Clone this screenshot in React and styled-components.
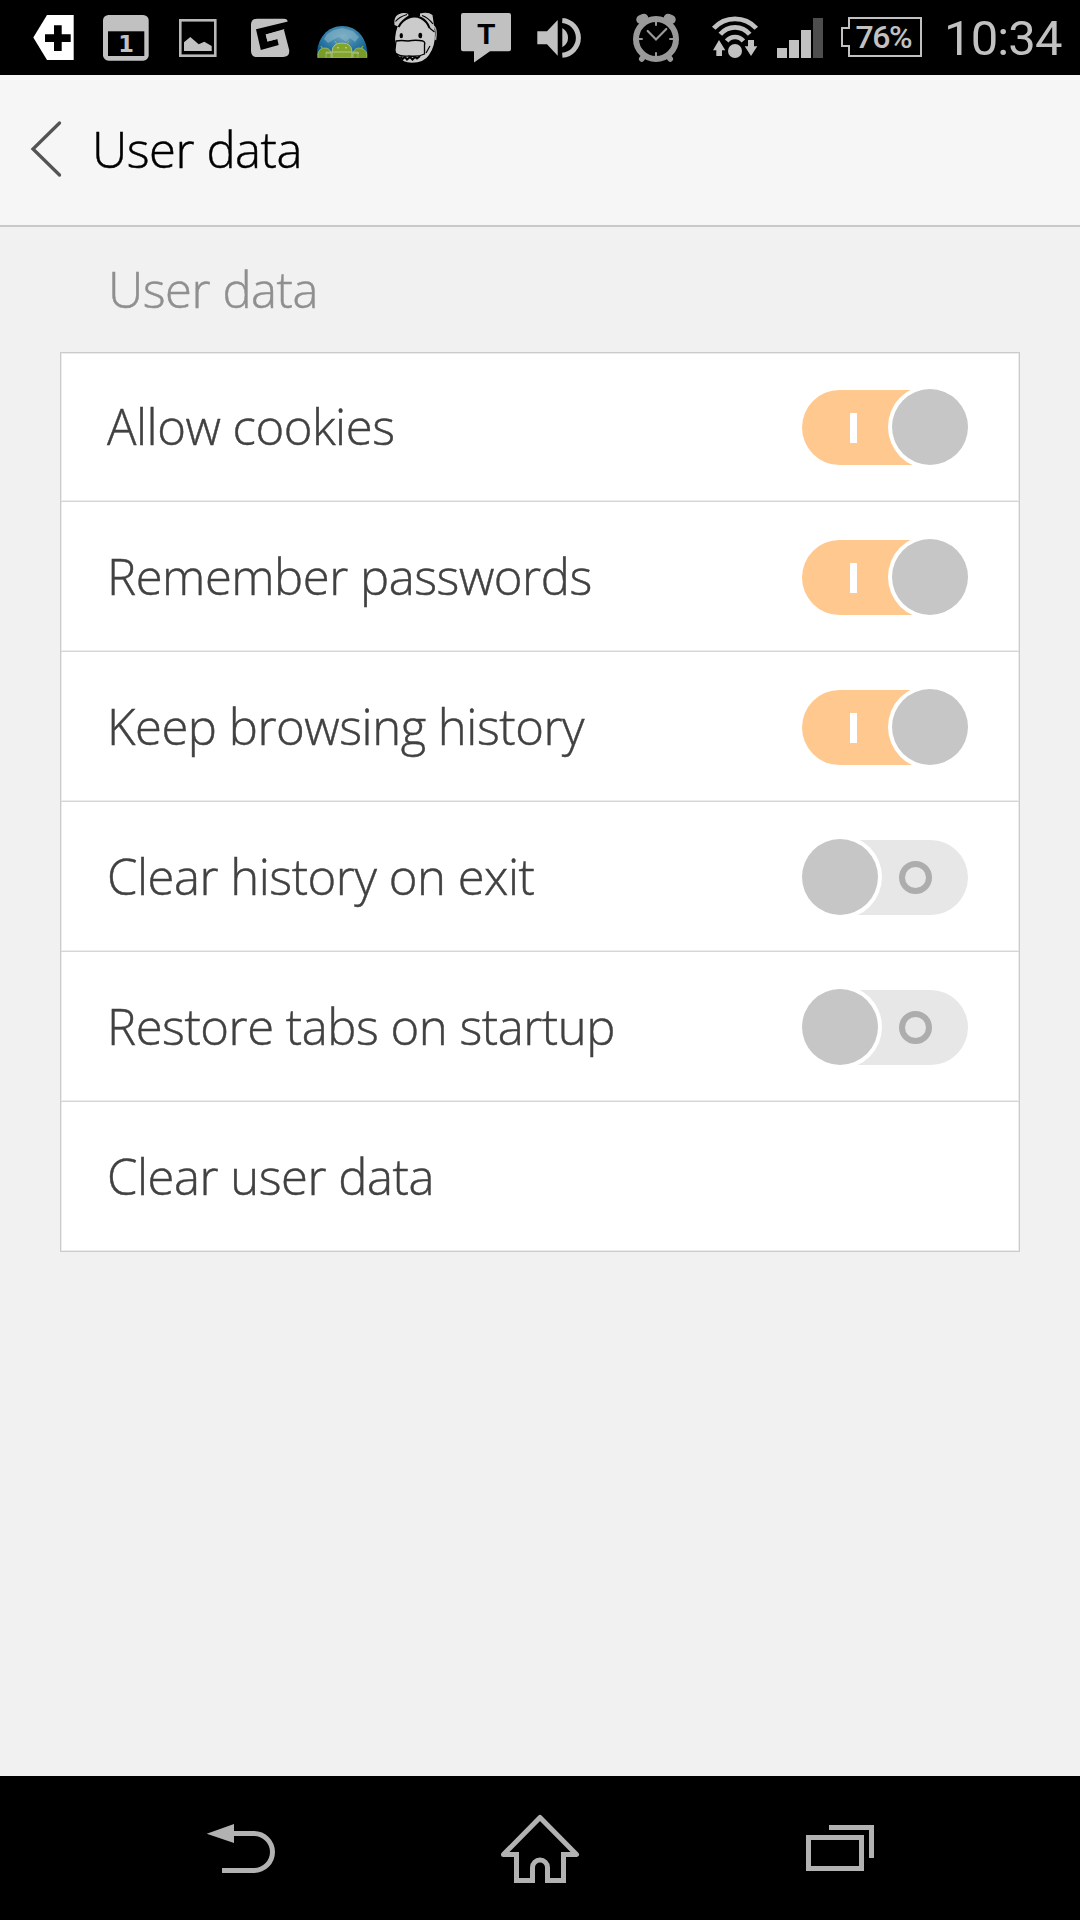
import styled, { createGlobalStyle, css } from 'styled-components';

const GlobalStyle = createGlobalStyle`
  * {
    box-sizing: border-box;
  }

  body {
    margin: 0;
    background: #f1f1f1;
    font-family: 'Open Sans', 'Noto Sans', sans-serif;
  }
`;

const lightText = css`
  font-size: 49px;
  font-weight: 300;
  line-height: 66px;
  letter-spacing: -0.48px;
  -webkit-text-stroke: 0.45px currentColor;
`;

const Screen = styled.div`
  width: 1080px;
  height: 1920px;
  display: flex;
  flex-direction: column;
  background: #f1f1f1;
  overflow: hidden;
`;

const StatusBar = styled.div`
  height: 75px;
  flex-shrink: 0;
  display: flex;
  justify-content: space-between;
  padding: 0 18px;
  background: #000;
  color: #c1c1c1;
  font-family: Roboto, sans-serif;

  svg {
    display: block;
    flex-shrink: 0;
  }
`;

const Notifications = styled.div`
  display: flex;
`;

const SystemIcons = styled.div`
  display: flex;
  align-items: center;
`;

const StatusIcon = styled.svg.attrs({ height: 75 })`
  margin-right: ${({ $gap }) => $gap || 0}px;
`;

const Clock = styled.span`
  width: 118px;
  font-size: 49px;
  letter-spacing: -0.9px;
  line-height: 75px;
  white-space: nowrap;
  padding-top: 2px;
`;

const Header = styled.header`
  height: 152px;
  flex-shrink: 0;
  display: flex;
  align-items: center;
  gap: 29px;
  padding: 0 0 3px 30px;
  background: #f6f6f6;
  border-bottom: 2px solid #c9c9c9;
`;

const Title = styled.h1`
  ${lightText}
  margin: 0;
  color: #000;
`;

const Content = styled.main`
  flex: 1;
  padding: 0 60px;
`;

const SectionTitle = styled.h2`
  ${lightText}
  margin: 0;
  height: 125px;
  padding: 29px 0 0 48px;
  color: #8f8f8f;
`;

const Card = styled.div`
  background: #fff;
  border: 1px solid #cbcbcb;
  box-shadow: inset 0 0 0 1px #ececec;
`;

const Row = styled.div`
  height: 150px;
  display: flex;
  align-items: center;
  justify-content: space-between;
  padding: 2px 51px 0 46px;
  border-bottom: 1px solid #d6d6d6;
  box-shadow: inset 0 -1px 0 #ececec;

  &:first-child {
    height: 149px;
    padding-top: 1px;
  }

  &:last-child {
    height: 149px;
    border-bottom: 0;
  }
`;

const Label = styled.span`
  ${lightText}
  padding-bottom: 4px;
  color: #414141;
`;

const Track = styled.div`
  width: 166px;
  height: 75px;
  display: flex;
  align-items: center;
  justify-content: space-between;
  flex-direction: ${({ $on }) => ($on ? 'row' : 'row-reverse')};
  padding: ${({ $on }) => ($on ? '0 0 0 48px' : '0 36px 0 0')};
  border-radius: 38px;
  background: ${({ $on }) => ($on ? '#ffc88e' : '#e7e7e7')};
`;

const Knob = styled.span`
  width: 76px;
  height: 76px;
  flex-shrink: 0;
  border-radius: 50%;
  background: #c6c6c6;
  box-shadow: 0 0 0 4px #fff;
  margin: 0 ${({ $on }) => ($on ? '0.5px' : '0')} 1px ${({ $on }) => ($on ? '0' : '-0.5px')};
`;

const OnMark = styled.span`
  width: 7px;
  height: 30px;
  background: #fff;
`;

const OffMark = styled.span`
  width: 33px;
  height: 33px;
  border: 6px solid #adadad;
  border-radius: 50%;
`;

const NavBar = styled.nav`
  height: 144px;
  flex-shrink: 0;
  display: flex;
  justify-content: space-between;
  padding: 0 190px;
  background: #000;
`;

const NavIcon = styled.svg.attrs({ width: 100, height: 144, viewBox: '0 0 100 144' })`
  display: block;
  fill: none;
  stroke: #b2b2b2;
  stroke-width: 5;
`;

const settings = [
  { label: 'Allow cookies', on: true },
  { label: 'Remember passwords', on: true },
  { label: 'Keep browsing history', on: true },
  { label: 'Clear history on exit', on: false },
  { label: 'Restore tabs on startup', on: false },
  { label: 'Clear user data' },
];

function Toggle({ on }) {
  return (
    <Track $on={on}>
      {on ? <OnMark /> : <OffMark />}
      <Knob $on={on} />
    </Track>
  );
}

function NotificationIcons() {
  return (
    <Notifications>
      <StatusIcon width="72" viewBox="0 0 72 75">
        <path d="M15.3 37.5L29 15H55.7V60H29Z" fill="#fff" />
        <path d="M27 34.3H36V25.3H43.7V34.3H52.7V42H43.7V51H36V42H27Z" fill="#000" />
      </StatusIcon>

      <StatusIcon width="72" viewBox="0 0 72 75">
        <rect x="13" y="15" width="45.7" height="45.7" rx="5.5" fill="#c1c1c1" />
        <rect x="18" y="31.3" width="36.3" height="24.7" fill="#000" />
        <text x="36" y="52.3" fontFamily="DejaVu Sans" fontWeight="700" fontSize="22.5" textAnchor="middle" fill="#c1c1c1">1</text>
      </StatusIcon>

      <StatusIcon width="72" viewBox="0 0 72 75">
        <rect x="18.3" y="20.3" width="35" height="35.4" fill="none" stroke="#b9b9b9" strokeWidth="2.6" />
        <path d="M22 42.3L28.3 37L36.7 44.3L42.3 41.7L49.7 46V51H22Z" fill="#c1c1c1" />
      </StatusIcon>

      <StatusIcon width="72" viewBox="0 0 72 75">
        <path d="M23 18.7H50Q53.5 18.7 53.7 22L50 30L55.2 50Q56 57 49 57H23Q17 57 17 51V24.5Q17 18.7 23 18.7Z" fill="#c1c1c1" />
        <path d="M22 29.3L54 21.6V28L31.7 34.6L33.5 41.4L43.3 39L44.7 45L26.8 50.1Z" fill="#000" />
        <path d="M31.7 34.6L49.5 30L51 38.5L43.3 39L33.5 41.4Z" fill="#c1c1c1" />
      </StatusIcon>

      <StatusIcon width="72" viewBox="0 0 72 75">
        <defs>
          <clipPath id="dome">
            <path d="M11 57.7C10 39 21 26 36.2 26S62.4 39 61.3 57.7Z" />
          </clipPath>
          <radialGradient id="sky" cx="50%" cy="35%" r="65%">
            <stop offset="0" stopColor="#6da3bd" />
            <stop offset="0.5" stopColor="#347ea8" />
            <stop offset="1" stopColor="#075488" />
          </radialGradient>
        </defs>
        <g clipPath="url(#dome)">
          <rect x="10" y="25" width="53" height="33" fill="url(#sky)" />
          <path d="M21 34L28 30L36 28L47 31L53 37L49 42L44 38L40 42L33 37L27 40L22 43L18 39Z" fill="#8ebacb" opacity="0.55" />
          <path d="M12 58V54Q13 48 19 48Q24 48 25 53V58ZM47 58V54Q48 48 53 48Q59 48 61 54V58ZM20 58V52H52V58Z" fill="#789b25" stroke="#a3bd7b" strokeWidth="0.8" />
          <path d="M26 51.5Q26.5 43 36 43T46 51.5V58H26Z" fill="#83a52c" stroke="#b4c796" strokeWidth="0.9" />
          <path d="M29 41L31 44M43 41L41 44M15 46L17 49M57 46L55 49" stroke="#8eaf45" strokeWidth="1.2" />
          <path d="M26 52H46M20 53H25M47 53H53" stroke="#bacaa0" strokeWidth="0.9" />
          <circle cx="32" cy="47.7" r="0.8" fill="#d5dfba" />
          <circle cx="40" cy="47.7" r="0.8" fill="#d5dfba" />
        </g>
      </StatusIcon>

      <StatusIcon width="72" viewBox="0 0 72 75">
        <path d="M21 24Q27 17 37 16Q55 15 57 32Q57.5 46 51 55Q46 62.7 34 62.7Q24 62.5 22 57L17 52V42Q17 31 21 24Z" fill="#cbcbcb" />
        <path d="M56 26Q59.5 30 57.5 40" fill="none" stroke="#a5a5a5" strokeWidth="1.5" />
        <path d="M16.5 25Q15 14 25 13Q31 12.5 30.5 15.5Q25 19 21 27ZM42 13.5Q50 11.5 54.5 15L56.5 29L50 28Q48 20 42 16Z" fill="#c6c6c6" />
        <path d="M20.5 27Q24 20 31 17.500Q37 15.500 43 18Q49 21 51.500 28" fill="none" stroke="#000" strokeWidth="2" />
        <path d="M17.500 21.500Q21 17 29 14.500M44 15.500Q50 17.500 55 24" fill="none" stroke="#000" strokeWidth="1.200" />
        <path d="M51.500 28L56.500 32" stroke="#000" strokeWidth="1.200" />
        <ellipse cx="23.3" cy="35.7" rx="1.7" ry="2.6" fill="#000" />
        <ellipse cx="42.3" cy="35.5" rx="1.9" ry="2.8" fill="#000" />
        <path d="M22.500 56.500L24.500 59L27 57L29 59.500L32 57L34.500 59.500L37 57L39 58.500L42 56" fill="none" stroke="#000" strokeWidth="2" />
        <path d="M18 41Q23 40 30 41Q38 39.5 45 41Q47.5 42 46.5 45V54Q41 57 31 56Q22 57 17.5 53Q16.5 50 17.5 45Z" fill="#cbcbcb" stroke="#000" strokeWidth="1.3" />
        <path d="M48 53L52 46" fill="none" stroke="#000" strokeWidth="1.2" />
      </StatusIcon>

      <StatusIcon width="72" viewBox="0 0 72 75">
        <path d="M13 13H59Q61 13 61 15V49.3Q61 51.3 59 51.3H40L24 62.5V51.3H13Q11 51.3 11 49.3V15Q11 13 13 13Z" fill="#c1c1c1" />
        <text x="36.2" y="44" fontFamily="Liberation Sans" fontWeight="700" fontSize="29.5" textAnchor="middle" fill="#000">T</text>
      </StatusIcon>

      <StatusIcon width="72" viewBox="0 0 72 75">
        <path d="M15.3 31.3H25L35.7 20V55.7L25 44.3H15.3Z" fill="#c1c1c1" />
        <path d="M40.3 28Q46 31.5 46 37.7T40.3 47.3Z" fill="#c1c1c1" />
        <path d="M40.3 20.5A17.4 17.4 0 0 1 40.3 55.2" fill="none" stroke="#c1c1c1" strokeWidth="5" />
      </StatusIcon>
    </Notifications>
  );
}

function SystemStatus() {
  return (
    <SystemIcons>
      <StatusIcon width="48" $gap={28} viewBox="0 0 48 75">
        <g fill="none" stroke="#999" strokeLinecap="round">
          <circle cx="24" cy="39" r="20" strokeWidth="6" />
          <path d="M8.5 19.5L12 18M36 18L39.5 19.5" strokeWidth="8.5" />
          <path d="M12 56L9.7 59M36 56L38.3 59" strokeWidth="5.5" />
          <path d="M15.7 31L24 39.5L34.3 29" strokeWidth="2.2" />
          <path d="M24 22V25M24 53V56M7 39H10M38 39H41" strokeWidth="2" />
        </g>
      </StatusIcon>

      <StatusIcon width="54" $gap={14} viewBox="0 0 54 75">
        <g fill="none" stroke="#c1c1c1" strokeWidth="4.7">
          <path d="M5.7 28.3A28.6 28.6 0 0 1 48.3 28.3" />
          <path d="M12.3 34.3A19 19 0 0 1 41.7 34.3" />
          <path d="M18.7 41A10.6 10.6 0 0 1 35.3 41" />
        </g>
        <path d="M11 40L17.3 50.3H14V56H8.3V50.3H5ZM43 56L36.7 46.3H40V40H46V46.3H49.3Z" fill="#c1c1c1" />
        <circle cx="27" cy="51" r="7" fill="#c1c1c1" />
      </StatusIcon>

      <StatusIcon width="48" $gap={16} viewBox="0 0 48 75">
        <path d="M1 48H11V58H1ZM13 40H23V58H13ZM25 30H35V58H25Z" fill="#c1c1c1" />
        <rect x="37" y="18" width="10" height="40" fill="#4d4d4d" />
      </StatusIcon>

      <StatusIcon width="84" $gap={20} viewBox="0 0 84 75">
        <path d="M9 18H81V56H9V46H2V28H9Z" fill="none" stroke="#c1c1c1" strokeWidth="2" />
        <text x="44" y="48" fontFamily="Roboto" fontWeight="500" fontSize="32" textLength="57" textAnchor="middle" fill="#c1c1c1">76%</text>
      </StatusIcon>

      <Clock>10:34</Clock>
    </SystemIcons>
  );
}

function App() {
  return (
    <Screen>
      <GlobalStyle />
      <StatusBar>
        <NotificationIcons />
        <SystemStatus />
      </StatusBar>

      <Header>
        <svg width="33" height="60" viewBox="0 0 33 60" fill="none" stroke="#545454" strokeWidth="3.3" strokeLinecap="round">
          <path d="M29.5 4L3 30L29.5 56" />
        </svg>
        <Title>User data</Title>
      </Header>

      <Content>
        <SectionTitle>User data</SectionTitle>
        <Card>
          {settings.map(({ label, on }) => (
            <Row key={label}>
              <Label>{label}</Label>
              {on !== undefined && <Toggle on={on} />}
            </Row>
          ))}
        </Card>
      </Content>

      <NavBar>
        <NavIcon>
          <path d="M16.7 57.7L44 48V67Z" fill="#b2b2b2" stroke="none" />
          <path d="M43 57.5H64A18.5 18.5 0 0 1 64 94.5H32" />
        </NavIcon>
        <NavIcon>
          <path d="M29 78.5H13.5L50 41.5L86.5 78.5H71" strokeLinejoin="round" />
          <path d="M26.5 78V104.5H42.5V91.5A7.5 7.5 0 0 1 57.5 91.5V104.5H73.5V78" />
        </NavIcon>
        <NavIcon>
          <rect x="18.5" y="61.5" width="53" height="31" />
          <path d="M39 51.5H81.5V82" />
        </NavIcon>
      </NavBar>
    </Screen>
  );
}

export default App;
